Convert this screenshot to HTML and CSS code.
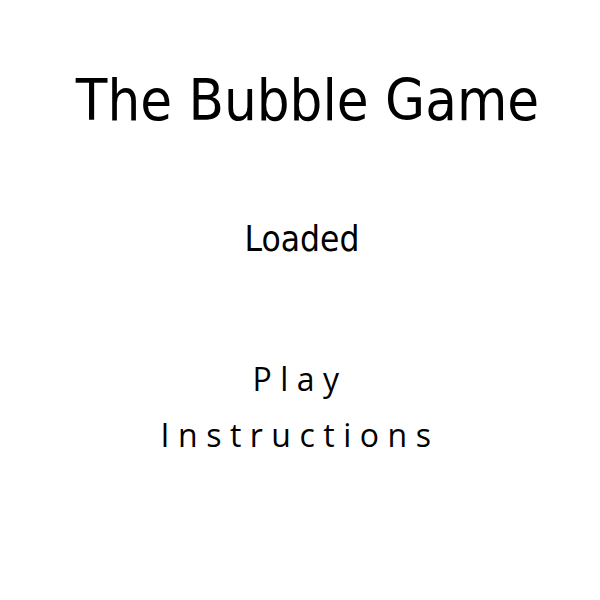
FILE: index.html
```html
<!DOCTYPE html>
<html>
<head>
<meta charset="utf-8">
<title>The Bubble Game</title>
<link rel="stylesheet" href="styles.css">
</head>
<body>
<main class="screen">
  <h1 class="title">The Bubble Game</h1>
  <p class="status">Loaded</p>
  <nav class="menu">
    <a class="menu-item" href="#">Play</a>
    <a class="menu-item" href="#">Instructions</a>
  </nav>
</main>
</body>
</html>
```
FILE: styles.css
```css
html, body {
  margin: 0;
  padding: 0;
  background: #fff;
}

.screen {
  width: 600px;
  height: 600px;
  display: flex;
  flex-direction: column;
  align-items: center;
  color: #000;
  font-family: "DejaVu Sans Condensed", "DejaVu Sans", sans-serif;
}

.title {
  margin: 66px 0 0 15px;
  font-size: 57.5px;
  font-weight: normal;
  line-height: 70px;
}

.status {
  margin: 83px 0 0 4px;
  font-size: 35px;
  line-height: 40px;
}

.menu {
  margin-top: 100px;
  display: flex;
  flex-direction: column;
  align-items: center;
  gap: 16px;
}

.menu-item {
  color: #000;
  text-decoration: none;
  font-family: "Open Sans", sans-serif;
  font-size: 32px;
  line-height: 40px;
  letter-spacing: 8.5px;
}
```
